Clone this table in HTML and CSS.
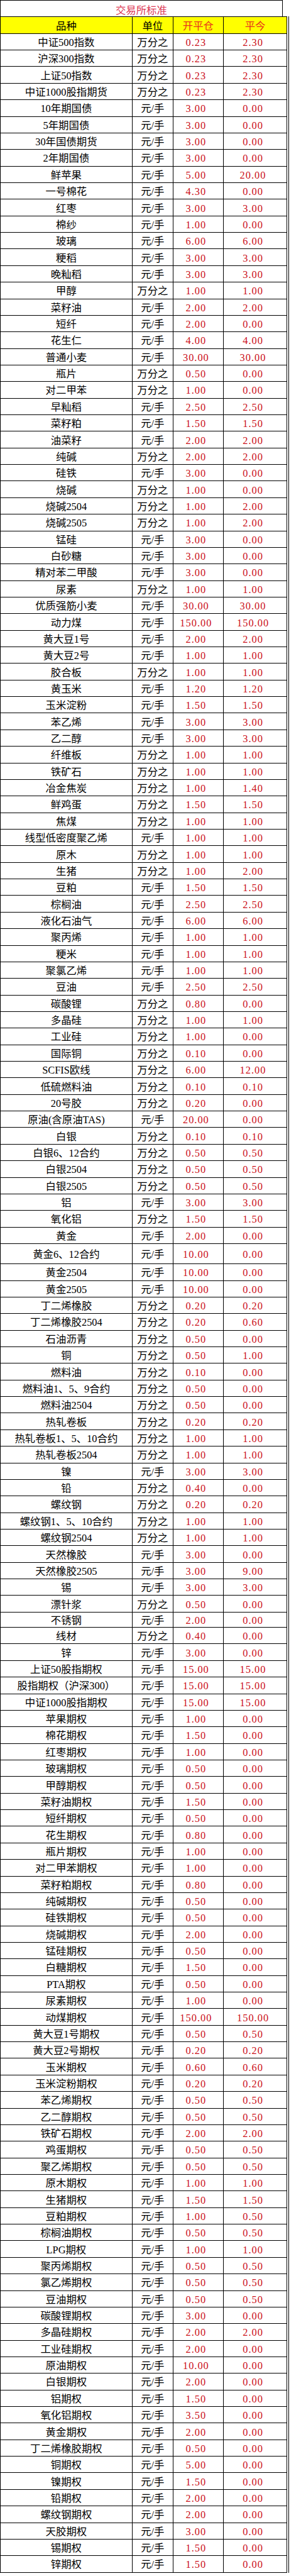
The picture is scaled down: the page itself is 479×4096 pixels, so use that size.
FILE: index.html
```html
<!DOCTYPE html>
<html lang="zh-CN">
<head>
<meta charset="utf-8">
<title>交易所标准</title>
<link rel="stylesheet" href="styles.css">
</head>
<body>
<div class="sheet">
  <div class="title">交易所标准</div>
  <div class="grid">
  <table class="rates">
    <colgroup>
      <col class="c-name"><col class="c-unit"><col class="c-open"><col class="c-today">
    </colgroup>
    <thead>
      <tr class="head"><th>品种</th><th>单位</th><th class="hred">开平仓</th><th class="hred">平今</th></tr>
    </thead>
    <tbody>
      <tr><td>中证500指数</td><td>万分之</td><td>0.23</td><td>2.30</td></tr>
      <tr><td>沪深300指数</td><td>万分之</td><td>0.23</td><td>2.30</td></tr>
      <tr><td>上证50指数</td><td>万分之</td><td>0.23</td><td>2.30</td></tr>
      <tr><td>中证1000股指期货</td><td>万分之</td><td>0.23</td><td>2.30</td></tr>
      <tr><td>10年期国债</td><td>元/手</td><td>3.00</td><td>0.00</td></tr>
      <tr><td>5年期国债</td><td>元/手</td><td>3.00</td><td>0.00</td></tr>
      <tr><td>30年国债期货</td><td>元/手</td><td>3.00</td><td>0.00</td></tr>
      <tr><td>2年期国债</td><td>元/手</td><td>3.00</td><td>0.00</td></tr>
      <tr><td>鲜苹果</td><td>元/手</td><td>5.00</td><td>20.00</td></tr>
      <tr><td>一号棉花</td><td>元/手</td><td>4.30</td><td>0.00</td></tr>
      <tr><td>红枣</td><td>元/手</td><td>3.00</td><td>3.00</td></tr>
      <tr><td>棉纱</td><td>元/手</td><td>1.00</td><td>0.00</td></tr>
      <tr><td>玻璃</td><td>元/手</td><td>6.00</td><td>6.00</td></tr>
      <tr><td>粳稻</td><td>元/手</td><td>3.00</td><td>3.00</td></tr>
      <tr><td>晚籼稻</td><td>元/手</td><td>3.00</td><td>3.00</td></tr>
      <tr><td>甲醇</td><td>万分之</td><td>1.00</td><td>1.00</td></tr>
      <tr><td>菜籽油</td><td>元/手</td><td>2.00</td><td>2.00</td></tr>
      <tr><td>短纤</td><td>元/手</td><td>2.00</td><td>0.00</td></tr>
      <tr><td>花生仁</td><td>元/手</td><td>4.00</td><td>4.00</td></tr>
      <tr><td>普通小麦</td><td>元/手</td><td>30.00</td><td>30.00</td></tr>
      <tr><td>瓶片</td><td>万分之</td><td>0.50</td><td>0.00</td></tr>
      <tr><td>对二甲苯</td><td>万分之</td><td>1.00</td><td>0.00</td></tr>
      <tr><td>早籼稻</td><td>元/手</td><td>2.50</td><td>2.50</td></tr>
      <tr><td>菜籽粕</td><td>元/手</td><td>1.50</td><td>1.50</td></tr>
      <tr><td>油菜籽</td><td>元/手</td><td>2.00</td><td>2.00</td></tr>
      <tr><td>纯碱</td><td>万分之</td><td>2.00</td><td>2.00</td></tr>
      <tr><td>硅铁</td><td>元/手</td><td>3.00</td><td>0.00</td></tr>
      <tr><td>烧碱</td><td>万分之</td><td>1.00</td><td>0.00</td></tr>
      <tr><td>烧碱2504</td><td>万分之</td><td>1.00</td><td>2.00</td></tr>
      <tr><td>烧碱2505</td><td>万分之</td><td>1.00</td><td>2.00</td></tr>
      <tr><td>锰硅</td><td>元/手</td><td>3.00</td><td>0.00</td></tr>
      <tr><td>白砂糖</td><td>元/手</td><td>3.00</td><td>0.00</td></tr>
      <tr><td>精对苯二甲酸</td><td>元/手</td><td>3.00</td><td>0.00</td></tr>
      <tr><td>尿素</td><td>万分之</td><td>1.00</td><td>1.00</td></tr>
      <tr><td>优质强筋小麦</td><td>元/手</td><td>30.00</td><td>30.00</td></tr>
      <tr><td>动力煤</td><td>元/手</td><td>150.00</td><td>150.00</td></tr>
      <tr><td>黄大豆1号</td><td>元/手</td><td>2.00</td><td>2.00</td></tr>
      <tr><td>黄大豆2号</td><td>元/手</td><td>1.00</td><td>1.00</td></tr>
      <tr><td>胶合板</td><td>万分之</td><td>1.00</td><td>1.00</td></tr>
      <tr><td>黄玉米</td><td>元/手</td><td>1.20</td><td>1.20</td></tr>
      <tr><td>玉米淀粉</td><td>元/手</td><td>1.50</td><td>1.50</td></tr>
      <tr><td>苯乙烯</td><td>元/手</td><td>3.00</td><td>3.00</td></tr>
      <tr><td>乙二醇</td><td>元/手</td><td>3.00</td><td>3.00</td></tr>
      <tr><td>纤维板</td><td>万分之</td><td>1.00</td><td>1.00</td></tr>
      <tr><td>铁矿石</td><td>万分之</td><td>1.00</td><td>1.00</td></tr>
      <tr><td>冶金焦炭</td><td>万分之</td><td>1.00</td><td>1.40</td></tr>
      <tr><td>鲜鸡蛋</td><td>万分之</td><td>1.50</td><td>1.50</td></tr>
      <tr><td>焦煤</td><td>万分之</td><td>1.00</td><td>1.00</td></tr>
      <tr><td>线型低密度聚乙烯</td><td>元/手</td><td>1.00</td><td>1.00</td></tr>
      <tr><td>原木</td><td>万分之</td><td>1.00</td><td>1.00</td></tr>
      <tr><td>生猪</td><td>万分之</td><td>1.00</td><td>2.00</td></tr>
      <tr><td>豆粕</td><td>元/手</td><td>1.50</td><td>1.50</td></tr>
      <tr><td>棕榈油</td><td>元/手</td><td>2.50</td><td>2.50</td></tr>
      <tr><td>液化石油气</td><td>元/手</td><td>6.00</td><td>6.00</td></tr>
      <tr><td>聚丙烯</td><td>元/手</td><td>1.00</td><td>1.00</td></tr>
      <tr><td>粳米</td><td>元/手</td><td>1.00</td><td>1.00</td></tr>
      <tr><td>聚氯乙烯</td><td>元/手</td><td>1.00</td><td>1.00</td></tr>
      <tr><td>豆油</td><td>元/手</td><td>2.50</td><td>2.50</td></tr>
      <tr><td>碳酸锂</td><td>万分之</td><td>0.80</td><td>0.00</td></tr>
      <tr><td>多晶硅</td><td>万分之</td><td>1.00</td><td>1.00</td></tr>
      <tr><td>工业硅</td><td>万分之</td><td>1.00</td><td>0.00</td></tr>
      <tr><td>国际铜</td><td>万分之</td><td>0.10</td><td>0.00</td></tr>
      <tr><td>SCFIS欧线</td><td>万分之</td><td>6.00</td><td>12.00</td></tr>
      <tr><td>低硫燃料油</td><td>万分之</td><td>0.10</td><td>0.10</td></tr>
      <tr><td>20号胶</td><td>万分之</td><td>0.20</td><td>0.00</td></tr>
      <tr><td>原油(含原油TAS)</td><td>元/手</td><td>20.00</td><td>0.00</td></tr>
      <tr><td>白银</td><td>万分之</td><td>0.10</td><td>0.10</td></tr>
      <tr><td>白银6、12合约</td><td>万分之</td><td>0.50</td><td>0.50</td></tr>
      <tr><td>白银2504</td><td>万分之</td><td>0.50</td><td>0.50</td></tr>
      <tr><td>白银2505</td><td>万分之</td><td>0.50</td><td>0.50</td></tr>
      <tr><td>铝</td><td>元/手</td><td>3.00</td><td>3.00</td></tr>
      <tr><td>氧化铝</td><td>万分之</td><td>1.50</td><td>1.50</td></tr>
      <tr><td>黄金</td><td>元/手</td><td>2.00</td><td>0.00</td></tr>
      <tr class="tall"><td>黄金6、12合约</td><td>元/手</td><td>10.00</td><td>0.00</td></tr>
      <tr><td>黄金2504</td><td>元/手</td><td>10.00</td><td>0.00</td></tr>
      <tr><td>黄金2505</td><td>元/手</td><td>10.00</td><td>0.00</td></tr>
      <tr><td>丁二烯橡胶</td><td>万分之</td><td>0.20</td><td>0.20</td></tr>
      <tr><td>丁二烯橡胶2504</td><td>万分之</td><td>0.20</td><td>0.60</td></tr>
      <tr><td>石油沥青</td><td>万分之</td><td>0.50</td><td>0.00</td></tr>
      <tr><td>铜</td><td>万分之</td><td>0.50</td><td>1.00</td></tr>
      <tr><td>燃料油</td><td>万分之</td><td>0.10</td><td>0.00</td></tr>
      <tr><td>燃料油1、5、9合约</td><td>万分之</td><td>0.50</td><td>0.00</td></tr>
      <tr><td>燃料油2504</td><td>万分之</td><td>0.50</td><td>0.00</td></tr>
      <tr><td>热轧卷板</td><td>万分之</td><td>0.20</td><td>0.20</td></tr>
      <tr><td>热轧卷板1、5、10合约</td><td>万分之</td><td>1.00</td><td>1.00</td></tr>
      <tr><td>热轧卷板2504</td><td>万分之</td><td>1.00</td><td>1.00</td></tr>
      <tr><td>镍</td><td>元/手</td><td>3.00</td><td>3.00</td></tr>
      <tr><td>铅</td><td>万分之</td><td>0.40</td><td>0.00</td></tr>
      <tr><td>螺纹钢</td><td>万分之</td><td>0.20</td><td>0.20</td></tr>
      <tr><td>螺纹钢1、5、10合约</td><td>万分之</td><td>1.00</td><td>1.00</td></tr>
      <tr><td>螺纹钢2504</td><td>万分之</td><td>1.00</td><td>1.00</td></tr>
      <tr><td>天然橡胶</td><td>元/手</td><td>3.00</td><td>0.00</td></tr>
      <tr><td>天然橡胶2505</td><td>元/手</td><td>3.00</td><td>9.00</td></tr>
      <tr><td>锡</td><td>元/手</td><td>3.00</td><td>3.00</td></tr>
      <tr><td>漂针浆</td><td>万分之</td><td>0.50</td><td>0.00</td></tr>
      <tr class="short"><td>不锈钢</td><td>元/手</td><td>2.00</td><td>0.00</td></tr>
      <tr><td>线材</td><td>万分之</td><td>0.40</td><td>0.00</td></tr>
      <tr><td>锌</td><td>元/手</td><td>3.00</td><td>0.00</td></tr>
      <tr><td>上证50股指期权</td><td>元/手</td><td>15.00</td><td>15.00</td></tr>
      <tr><td>股指期权（沪深300）</td><td>元/手</td><td>15.00</td><td>15.00</td></tr>
      <tr><td>中证1000股指期权</td><td>元/手</td><td>15.00</td><td>15.00</td></tr>
      <tr><td>苹果期权</td><td>元/手</td><td>1.00</td><td>0.00</td></tr>
      <tr><td>棉花期权</td><td>元/手</td><td>1.50</td><td>0.00</td></tr>
      <tr><td>红枣期权</td><td>元/手</td><td>1.00</td><td>0.00</td></tr>
      <tr><td>玻璃期权</td><td>元/手</td><td>0.50</td><td>0.00</td></tr>
      <tr><td>甲醇期权</td><td>元/手</td><td>0.50</td><td>0.00</td></tr>
      <tr><td>菜籽油期权</td><td>元/手</td><td>1.50</td><td>0.00</td></tr>
      <tr><td>短纤期权</td><td>元/手</td><td>0.50</td><td>0.00</td></tr>
      <tr><td>花生期权</td><td>元/手</td><td>0.80</td><td>0.00</td></tr>
      <tr><td>瓶片期权</td><td>元/手</td><td>1.00</td><td>0.00</td></tr>
      <tr><td>对二甲苯期权</td><td>元/手</td><td>1.00</td><td>0.00</td></tr>
      <tr><td>菜籽粕期权</td><td>元/手</td><td>0.80</td><td>0.00</td></tr>
      <tr><td>纯碱期权</td><td>元/手</td><td>0.50</td><td>0.00</td></tr>
      <tr><td>硅铁期权</td><td>元/手</td><td>0.50</td><td>0.00</td></tr>
      <tr><td>烧碱期权</td><td>元/手</td><td>2.00</td><td>0.00</td></tr>
      <tr><td>锰硅期权</td><td>元/手</td><td>0.50</td><td>0.00</td></tr>
      <tr><td>白糖期权</td><td>元/手</td><td>1.50</td><td>0.00</td></tr>
      <tr><td>PTA期权</td><td>元/手</td><td>0.50</td><td>0.00</td></tr>
      <tr><td>尿素期权</td><td>元/手</td><td>1.00</td><td>0.00</td></tr>
      <tr><td>动煤期权</td><td>元/手</td><td>150.00</td><td>150.00</td></tr>
      <tr><td>黄大豆1号期权</td><td>元/手</td><td>0.50</td><td>0.50</td></tr>
      <tr><td>黄大豆2号期权</td><td>元/手</td><td>0.20</td><td>0.20</td></tr>
      <tr><td>玉米期权</td><td>元/手</td><td>0.60</td><td>0.60</td></tr>
      <tr><td>玉米淀粉期权</td><td>元/手</td><td>0.20</td><td>0.20</td></tr>
      <tr><td>苯乙烯期权</td><td>元/手</td><td>0.50</td><td>0.50</td></tr>
      <tr><td>乙二醇期权</td><td>元/手</td><td>0.50</td><td>0.50</td></tr>
      <tr><td>铁矿石期权</td><td>元/手</td><td>2.00</td><td>2.00</td></tr>
      <tr><td>鸡蛋期权</td><td>元/手</td><td>0.50</td><td>0.50</td></tr>
      <tr><td>聚乙烯期权</td><td>元/手</td><td>0.50</td><td>0.50</td></tr>
      <tr><td>原木期权</td><td>元/手</td><td>1.00</td><td>1.00</td></tr>
      <tr><td>生猪期权</td><td>元/手</td><td>1.50</td><td>1.50</td></tr>
      <tr><td>豆粕期权</td><td>元/手</td><td>1.00</td><td>0.50</td></tr>
      <tr><td>棕榈油期权</td><td>元/手</td><td>0.50</td><td>0.50</td></tr>
      <tr><td>LPG期权</td><td>元/手</td><td>1.00</td><td>1.00</td></tr>
      <tr><td>聚丙烯期权</td><td>元/手</td><td>0.50</td><td>0.50</td></tr>
      <tr><td>氯乙烯期权</td><td>元/手</td><td>0.50</td><td>0.50</td></tr>
      <tr><td>豆油期权</td><td>元/手</td><td>0.50</td><td>0.50</td></tr>
      <tr><td>碳酸锂期权</td><td>元/手</td><td>3.00</td><td>0.00</td></tr>
      <tr><td>多晶硅期权</td><td>元/手</td><td>2.00</td><td>2.00</td></tr>
      <tr><td>工业硅期权</td><td>元/手</td><td>2.00</td><td>0.00</td></tr>
      <tr><td>原油期权</td><td>元/手</td><td>10.00</td><td>0.00</td></tr>
      <tr><td>白银期权</td><td>元/手</td><td>2.00</td><td>0.00</td></tr>
      <tr><td>铝期权</td><td>元/手</td><td>1.50</td><td>0.00</td></tr>
      <tr><td>氧化铝期权</td><td>元/手</td><td>3.50</td><td>0.00</td></tr>
      <tr><td>黄金期权</td><td>元/手</td><td>2.00</td><td>0.00</td></tr>
      <tr><td>丁二烯橡胶期权</td><td>元/手</td><td>0.50</td><td>0.00</td></tr>
      <tr><td>铜期权</td><td>元/手</td><td>5.00</td><td>0.00</td></tr>
      <tr><td>镍期权</td><td>元/手</td><td>1.50</td><td>0.00</td></tr>
      <tr><td>铅期权</td><td>元/手</td><td>2.00</td><td>0.00</td></tr>
      <tr><td>螺纹钢期权</td><td>元/手</td><td>2.00</td><td>0.00</td></tr>
      <tr><td>天胶期权</td><td>元/手</td><td>3.00</td><td>0.00</td></tr>
      <tr><td>锡期权</td><td>元/手</td><td>1.50</td><td>0.00</td></tr>
      <tr><td>锌期权</td><td>元/手</td><td>1.50</td><td>0.00</td></tr>
    </tbody>
  </table>
  </div>
</div>
</body>
</html>
```

FILE: styles.css
```css
html, body {
  margin: 0;
  padding: 0;
  background: #ffffff;
}

body {
  font-family: "Liberation Serif", "Noto Sans CJK SC", serif;
  font-size: 16.4px;
  color: #000000;
}

.sheet {
  width: 460px;
}

.title {
  box-sizing: border-box;
  width: 449.8px;
  height: 26.4px;
  border: 1px solid #000000;
  border-bottom: 0;
  display: flex;
  align-items: center;
  justify-content: center;
  padding-top: 3px;
  color: #dc3a55;
  font-family: "Noto Sans CJK SC", sans-serif;
  line-height: 18px;
}

.grid {
  width: fit-content;
  padding-right: 2px;
  border-right: 1px solid #000000;
}

.rates {
  border-collapse: collapse;
  table-layout: fixed;
  width: 456.2px;
}

.c-name { width: 209.8px; }
.c-unit { width: 65.1px; }
.c-open { width: 80px; }
.c-today { width: 101.3px; }

.rates tr {
  height: 26.37px;
}

.rates tr.tall {
  height: 32.26px;
}

.rates tr.short {
  height: 24.35px;
}

.rates th,
.rates td {
  border: 1px solid #000000;
  padding: 3px 0 0;
  line-height: 18px;
  text-align: center;
  vertical-align: middle;
  white-space: nowrap;
  overflow: hidden;
  font-weight: normal;
}

.head th {
  background: #ffff00;
  color: #000000;
}

.head th.hred {
  color: #e8341c;
}

.rates td:nth-child(3),
.rates td:nth-child(4) {
  color: #cc111c;
  letter-spacing: 1px;
  padding-right: 7px;
}
```
